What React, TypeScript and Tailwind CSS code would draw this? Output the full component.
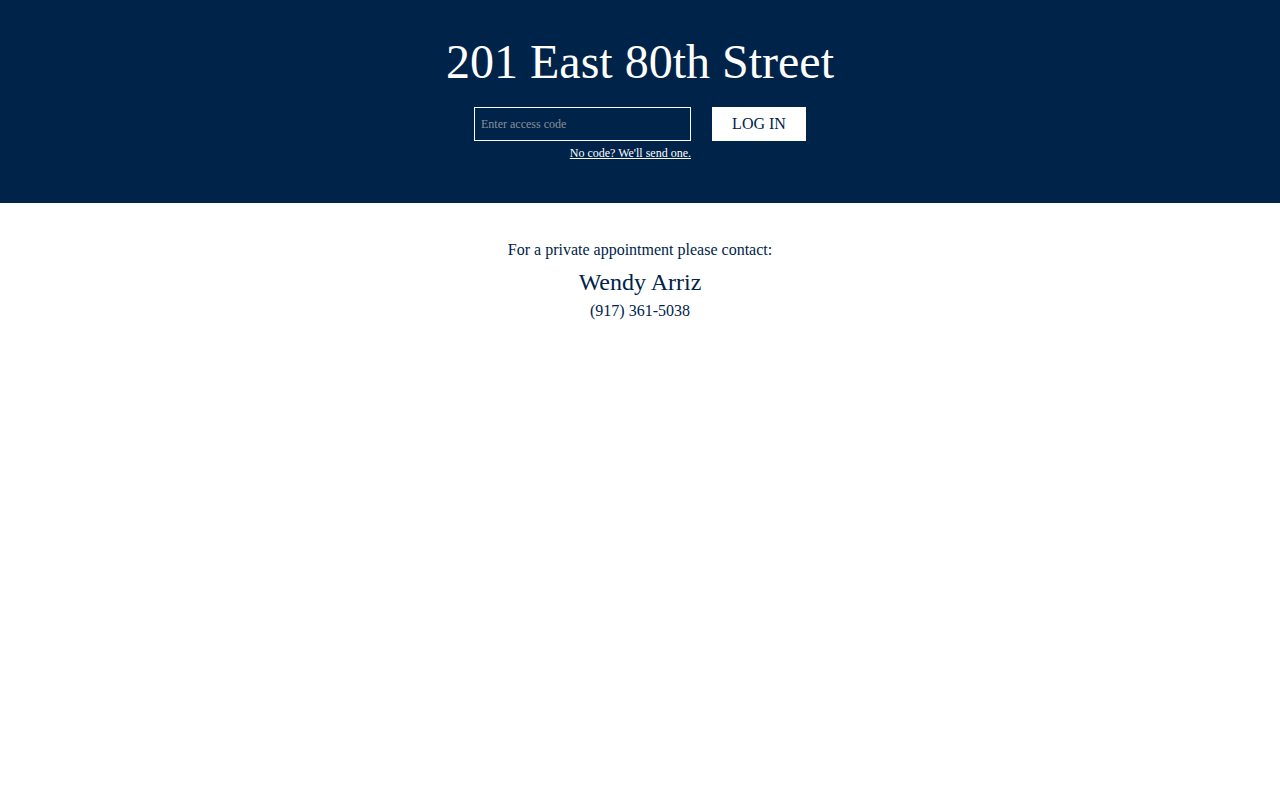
import React from 'react';

const serif = { fontFamily: '"Liberation Serif", "Times New Roman", serif' };

const App = () => {
  return (
    <div className="min-h-screen bg-white" style={serif}>
      {/* Header */}
      <section className="bg-[#002349] h-[203px] pt-[34px] text-white">
        <h1 className="text-center text-[48px] leading-[56px] font-normal">201 East 80th Street</h1>
        <div className="mt-[17px] flex justify-center">
          <div className="flex items-start gap-[21px]">
            <div className="flex flex-col items-end">
              <input
                type="text"
                placeholder="Enter access code"
                className="w-[217px] h-[34px] border border-white bg-transparent px-[6px] text-[12px] text-white placeholder:text-[#8a8f99] outline-none"
              />
              <a href="#" className="mt-[5px] text-[12px] leading-[15px] underline text-white">
                No code? We'll send one.
              </a>
            </div>
            <button className="w-[94px] h-[34px] bg-white text-[#002349] text-[16px]">LOG IN</button>
          </div>
        </div>
      </section>

      {/* Contact */}
      <section className="pt-[37px] text-center text-[#002349]">
        <p className="text-[16px] leading-[20px]">For a private appointment please contact:</p>
        <p className="mt-[8px] text-[24px] leading-[28px]">Wendy Arriz</p>
        <p className="mt-[5px] text-[16px] leading-[20px]">(917) 361-5038</p>
      </section>
    </div>
  );
};

export default App;
